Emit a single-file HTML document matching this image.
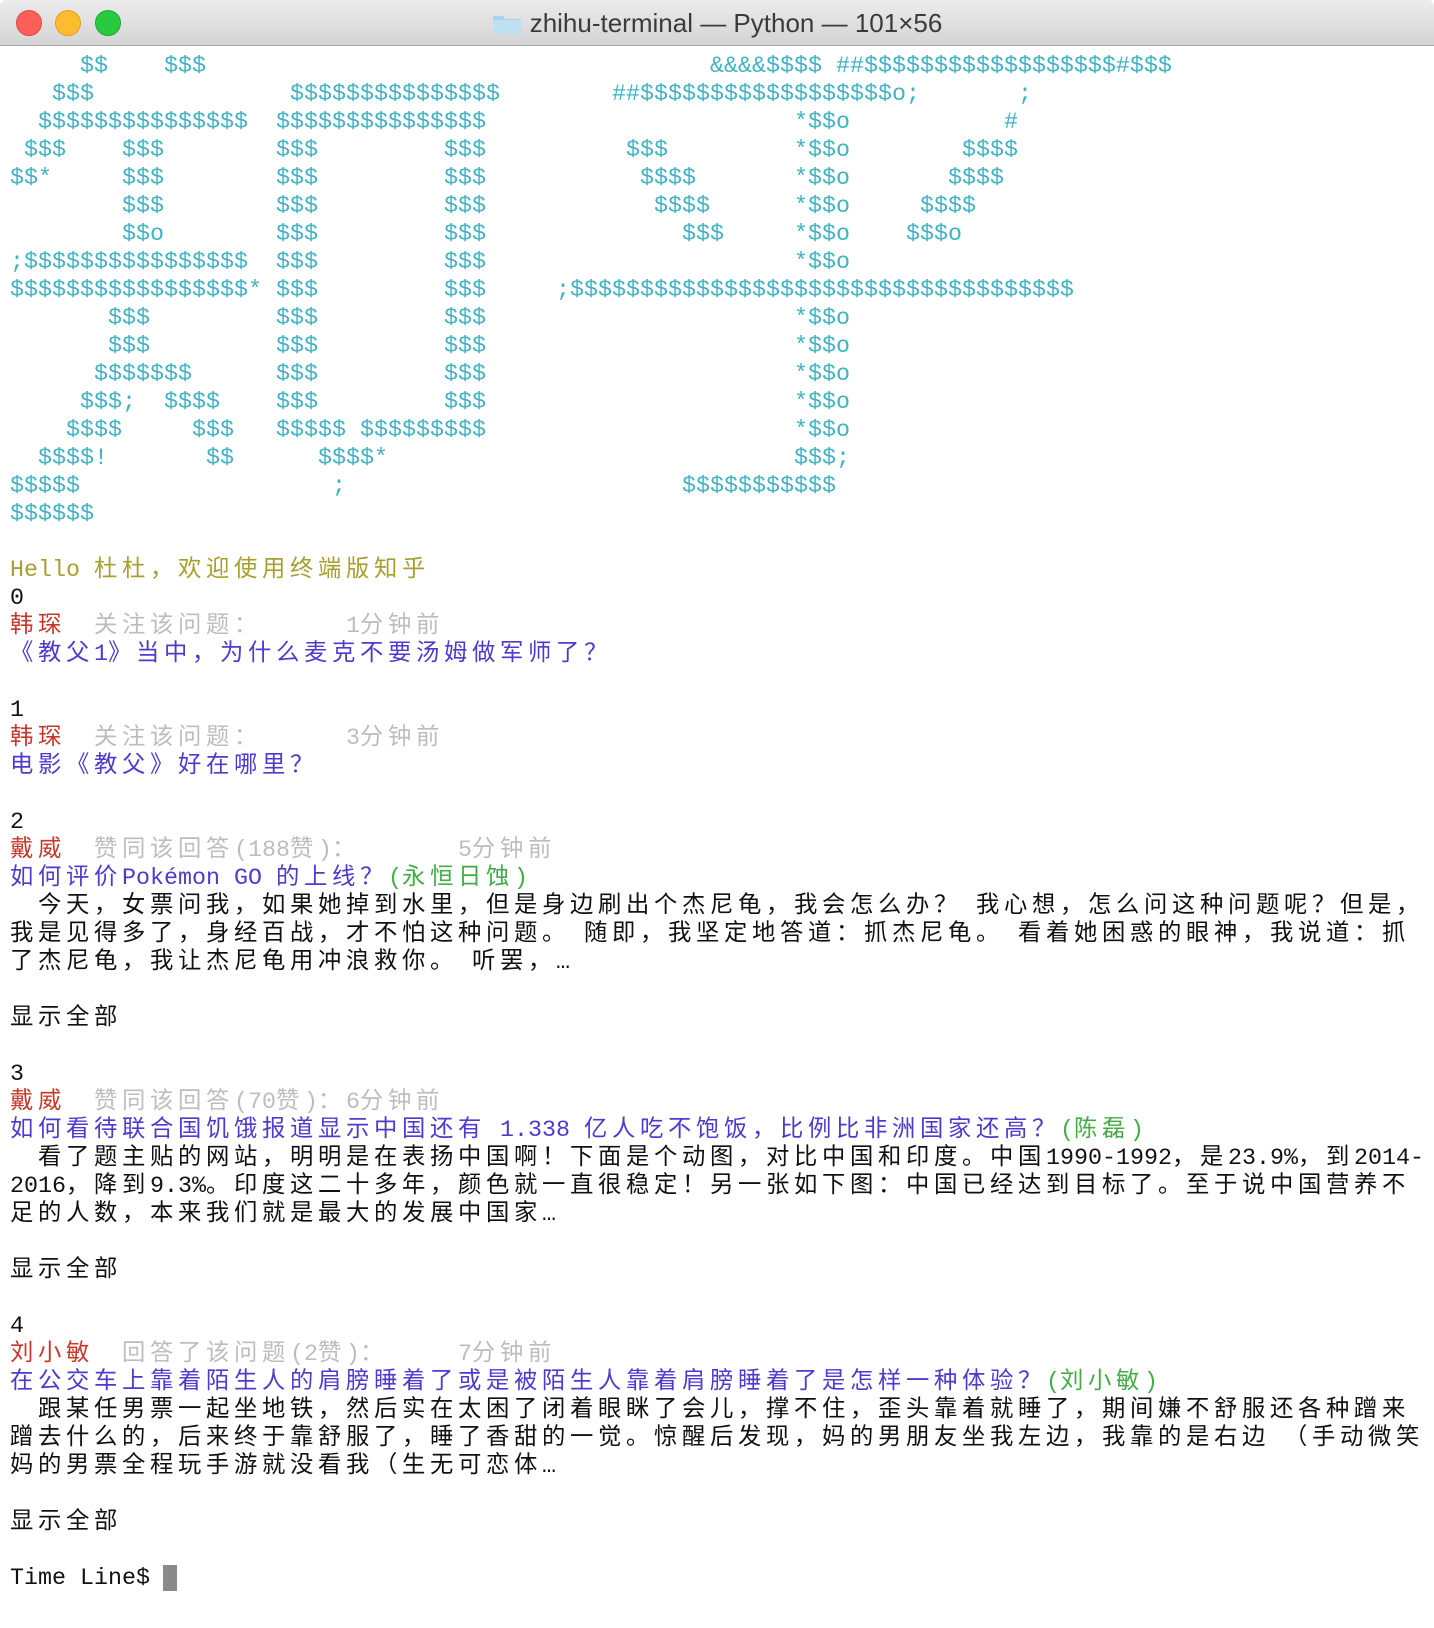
<!DOCTYPE html>
<html><head><meta charset="utf-8"><style>
html,body{margin:0;padding:0;background:#fff;width:1434px;height:1628px;overflow:hidden}
#bar{position:absolute;left:0;top:0;width:1434px;height:45px;background:linear-gradient(#ececec,#d4d4d4);border-bottom:1px solid #a5a5a5;border-radius:6px 6px 0 0}
.dot{position:absolute;top:10px;width:24px;height:24px;border-radius:50%}
#title{position:absolute;left:0;right:0;top:8px;text-align:center;font:26px "Liberation Sans",sans-serif;color:#3b3b3b}
#t{position:absolute;left:10px;top:53px;font-family:"Liberation Mono","Noto Sans CJK SC",monospace;font-size:23.33px;color:#111}
#t div{height:28px;line-height:28px;white-space:pre}
.w{display:inline-block;width:28px}
.a{color:#3fb3c4}.y{color:#a79f2e}.r{color:#c7382a}.g{color:#bdbdbd}.b{color:#4d3bd0}.gr{color:#43ad45}
#cur{position:absolute;left:163px;top:1565px;width:14px;height:26px;background:#8a8a8a}
</style></head><body>
<div id="bar">
<div class="dot" style="left:16px;background:#fc5f57;border:1px solid #de4a41"></div>
<div class="dot" style="left:55px;background:#fdbc2e;border:1px solid #dea123"></div>
<div class="dot" style="left:95px;background:#29c940;border:1px solid #1ea932"></div>
<div id="title"><svg width="30" height="22" viewBox="0 0 30 22" style="vertical-align:-3px;margin-right:8px"><path d="M1 3h10l2 3h16v15H1z" fill="#a9d3ec"/><path d="M1 7h28v14H1z" fill="#bfe0f3"/></svg>zhihu-terminal — Python — 101×56</div>
</div>
<div id="t">
<div class="a">     $$    $$$                                    &amp;&amp;&amp;&amp;$$$$ ##$$$$$$$$$$$$$$$$$$#$$$</div>
<div class="a">   $$$              $$$$$$$$$$$$$$$        ##$$$$$$$$$$$$$$$$$$o;       ;</div>
<div class="a">  $$$$$$$$$$$$$$$  $$$$$$$$$$$$$$$                      *$$o           #</div>
<div class="a"> $$$    $$$        $$$         $$$          $$$         *$$o        $$$$</div>
<div class="a">$$*     $$$        $$$         $$$           $$$$       *$$o       $$$$</div>
<div class="a">        $$$        $$$         $$$            $$$$      *$$o     $$$$</div>
<div class="a">        $$o        $$$         $$$              $$$     *$$o    $$$o</div>
<div class="a">;$$$$$$$$$$$$$$$$  $$$         $$$                      *$$o</div>
<div class="a">$$$$$$$$$$$$$$$$$* $$$         $$$     ;$$$$$$$$$$$$$$$$$$$$$$$$$$$$$$$$$$$$</div>
<div class="a">       $$$         $$$         $$$                      *$$o</div>
<div class="a">       $$$         $$$         $$$                      *$$o</div>
<div class="a">      $$$$$$$      $$$         $$$                      *$$o</div>
<div class="a">     $$$;  $$$$    $$$         $$$                      *$$o</div>
<div class="a">    $$$$     $$$   $$$$$ $$$$$$$$$                      *$$o</div>
<div class="a">  $$$$!       $$      $$$$*                             $$$;</div>
<div class="a">$$$$$                  ;                        $$$$$$$$$$$</div>
<div class="a">$$$$$$</div>
<div></div>
<div class="y">Hello 杜杜，欢迎使用终端版知乎</div>
<div>0</div>
<div><span class="r">韩琛</span>  <span class="g">关注该问题：      1分钟前</span></div>
<div class="b">《教父1》当中，为什么麦克不要汤姆做军师了？</div>
<div></div>
<div>1</div>
<div><span class="r">韩琛</span>  <span class="g">关注该问题：      3分钟前</span></div>
<div class="b">电影《教父》好在哪里？</div>
<div></div>
<div>2</div>
<div><span class="r">戴威</span>  <span class="g">赞同该回答(188赞)：       5分钟前</span></div>
<div><span class="b">如何评价Pokémon GO 的上线？</span><span class="gr">(永恒日蚀)</span></div>
<div>  今天，女票问我，如果她掉到水里，但是身边刷出个杰尼龟，我会怎么办？ 我心想，怎么问这种问题呢？但是，</div>
<div>我是见得多了，身经百战，才不怕这种问题。 随即，我坚定地答道：抓杰尼龟。 看着她困惑的眼神，我说道：抓</div>
<div>了杰尼龟，我让杰尼龟用冲浪救你。 听罢，…</div>
<div></div>
<div>显示全部</div>
<div></div>
<div>3</div>
<div><span class="r">戴威</span>  <span class="g">赞同该回答(70赞)：6分钟前</span></div>
<div><span class="b">如何看待联合国饥饿报道显示中国还有 1.338 亿人吃不饱饭，比例比非洲国家还高？</span><span class="gr">(陈磊)</span></div>
<div>  看了题主贴的网站，明明是在表扬中国啊！下面是个动图，对比中国和印度。中国1990-1992，是23.9%，到2014-</div>
<div>2016，降到9.3%。印度这二十多年，颜色就一直很稳定！另一张如下图：中国已经达到目标了。至于说中国营养不</div>
<div>足的人数，本来我们就是最大的发展中国家…</div>
<div></div>
<div>显示全部</div>
<div></div>
<div>4</div>
<div><span class="r">刘小敏</span>  <span class="g">回答了该问题(2赞)：     7分钟前</span></div>
<div><span class="b">在公交车上靠着陌生人的肩膀睡着了或是被陌生人靠着肩膀睡着了是怎样一种体验？</span><span class="gr">(刘小敏)</span></div>
<div>  跟某任男票一起坐地铁，然后实在太困了闭着眼眯了会儿，撑不住，歪头靠着就睡了，期间嫌不舒服还各种蹭来</div>
<div>蹭去什么的，后来终于靠舒服了，睡了香甜的一觉。惊醒后发现，妈的男朋友坐我左边，我靠的是右边 （手动微笑</div>
<div>妈的男票全程玩手游就没看我（生无可恋体…</div>
<div></div>
<div>显示全部</div>
<div></div>
<div>Time Line$ </div>
</div>
<div id="cur"></div>
<script>
(function(){
var root=document.getElementById('t');
var w=document.createTreeWalker(root,NodeFilter.SHOW_TEXT,null,false);
var nodes=[];while(w.nextNode())nodes.push(w.currentNode);
nodes.forEach(function(n){
var s=n.nodeValue;if(!/[\u2e80-\uffef]/.test(s))return;
var f=document.createDocumentFragment(),buf='';
for(var i=0;i<s.length;i++){var c=s[i];
if(/[\u2e80-\uffef]/.test(c)){if(buf){f.appendChild(document.createTextNode(buf));buf='';}
var sp=document.createElement('span');sp.className='w';sp.textContent=c;f.appendChild(sp);}
else buf+=c;}
if(buf)f.appendChild(document.createTextNode(buf));
n.parentNode.replaceChild(f,n);
});
})();
</script>
</body></html>
